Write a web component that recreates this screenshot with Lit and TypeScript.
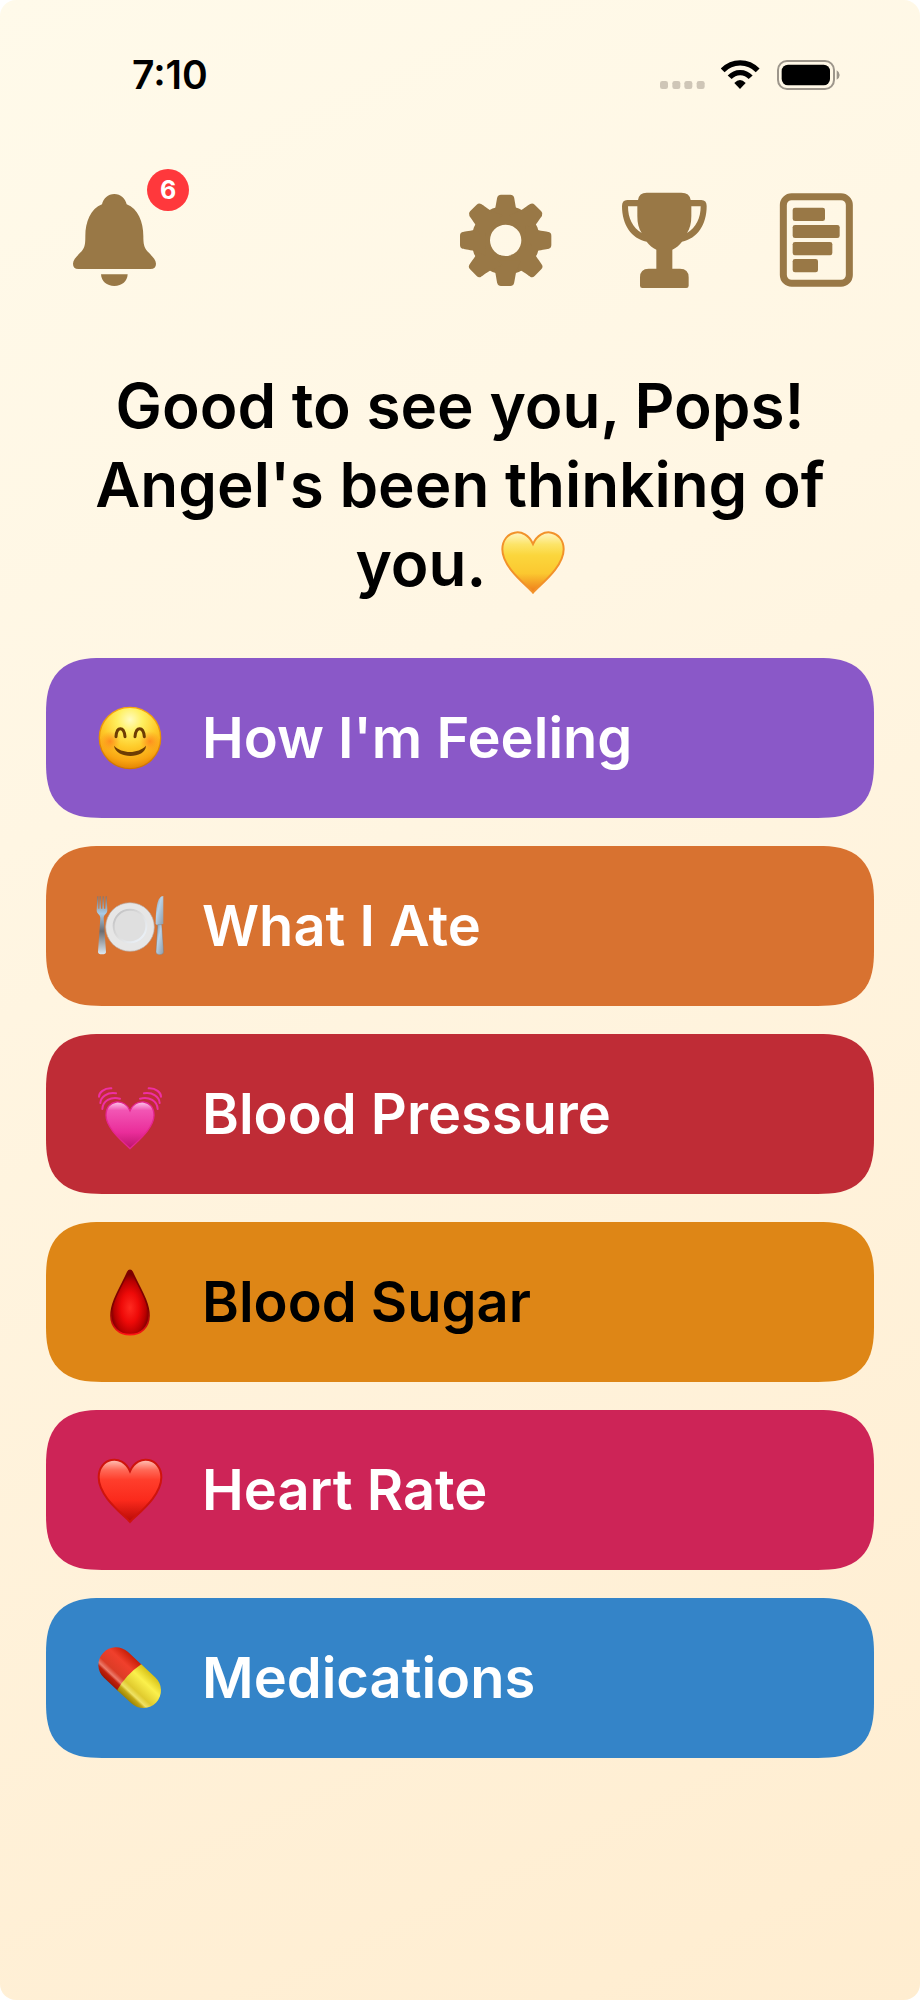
import { LitElement, html, css, svg } from "lit";
import { customElement, property } from "lit/decorators.js";

type Tone = "feeling" | "food" | "pressure" | "sugar" | "heart" | "meds";

const art: Record<Tone, unknown> = {
  feeling: svg`
    <defs>
      <radialGradient id="face" cx="50%" cy="20%" r="82%">
        <stop offset="0" stop-color="#fffbc0"/><stop offset=".25" stop-color="#fff060"/>
        <stop offset=".55" stop-color="#fecb2a"/><stop offset=".82" stop-color="#f9a512"/><stop offset="1" stop-color="#e07f00"/>
      </radialGradient>
      <radialGradient id="blush"><stop offset="0" stop-color="#ff7a1c" stop-opacity=".75"/><stop offset="1" stop-color="#ff8a1c" stop-opacity="0"/></radialGradient>
      <linearGradient id="rim" x1="0" y1="0" x2="0" y2="1"><stop offset="0" stop-color="#f9a80c"/><stop offset="1" stop-color="#d07400"/></linearGradient>
    </defs>
    <circle cx="102" cy="102" r="92" fill="url(#face)" stroke="url(#rim)" stroke-width="4"/>
    <circle cx="42" cy="112" r="31" fill="url(#blush)"/><circle cx="162" cy="112" r="31" fill="url(#blush)"/>
    <g fill="none" stroke="#6d3c04" stroke-width="9" stroke-linecap="round">
      <path d="M60 98C62 66 84 66 87 98"/><path d="M117 98C120 66 142 66 145 98"/>
    </g>
    <path d="M54 125C78 150 126 150 150 125C148 166 60 166 54 125Z" fill="#6d3c04"/>`,
  food: svg`
    <defs>
      <linearGradient id="steel" x1="0" y1="0" x2="0" y2="1"><stop offset="0" stop-color="#787476"/><stop offset=".3" stop-color="#a9cbe6"/><stop offset=".6" stop-color="#6d6c70"/><stop offset="1" stop-color="#dce8f2"/></linearGradient>
      <linearGradient id="blade" x1="0" y1="0" x2="1" y2="1"><stop offset="0" stop-color="#7b96aa"/><stop offset=".4" stop-color="#b8d2e8"/><stop offset="1" stop-color="#8f9aa4"/></linearGradient>
      <linearGradient id="well" x1="0" y1="0" x2="1" y2="1"><stop offset="0" stop-color="#bcbcbe"/><stop offset=".5" stop-color="#dedede"/><stop offset="1" stop-color="#eef6ff"/></linearGradient>
    </defs>
    <circle cx="102" cy="105" r="73" fill="#e6e6e6" stroke="#b8aaa4" stroke-width="2"/>
    <circle cx="102" cy="102" r="49" fill="#dfdfdf" stroke="url(#well)" stroke-width="6"/>
    <path d="M4 13L2 55C2 66 12 66 13 78L6 180Q6 187 18 187Q30 187 30 180L23 78C24 66 34 66 34 55L32 13L29 13L28 50L24 50L23 13L20 13L19 50L15 50L14 13L11 13L10 50L7 50L7 13Z" fill="url(#steel)"/>
    <path d="M202 12C184 12 179 48 179 96Q184 101 189 101L202 95Z" fill="url(#blade)"/>
    <path d="M185 98L180 180Q181 188 191 188Q202 188 203 180L197 98Z" fill="url(#blade)" stroke="#7c6d68" stroke-width="1"/>`,
  pressure: svg`
    <defs>
      <linearGradient id="pink" x1="0" y1="0" x2="0" y2="1"><stop offset="0" stop-color="#fbc6ea"/><stop offset=".18" stop-color="#f255b4"/><stop offset=".65" stop-color="#ea2d9a"/><stop offset="1" stop-color="#bc146c"/></linearGradient>
    </defs>
    <path d="M102 206C88 190 30 148 30 106C30 56 88 54 102 92C116 54 174 56 174 106C174 148 116 190 102 206Z" fill="url(#pink)" stroke="#e5258f" stroke-width="4"/>
    <g fill="none" stroke="#ee2fa4" stroke-width="6" stroke-linecap="round">
      <path d="M9 50C9 38 24 24 46 25"/><path d="M13 69C14 50 34 36 60 40"/><path d="M19 87C20 64 44 48 72 56"/>
      <path d="M195 50C195 38 180 24 158 25"/><path d="M191 69C190 50 170 36 144 40"/><path d="M185 87C184 64 160 48 132 56"/>
    </g>`,
  sugar: svg`
    <defs>
      <radialGradient id="drop" cx="50%" cy="58%" r="52%"><stop offset="0" stop-color="#ff2a20"/><stop offset=".45" stop-color="#ee0a08"/><stop offset=".8" stop-color="#b80000"/><stop offset="1" stop-color="#780000"/></radialGradient>
      <linearGradient id="dropRim" x1="0" y1="0" x2="0" y2="1"><stop offset=".6" stop-color="#7e0000"/><stop offset="1" stop-color="#ff1414"/></linearGradient>
    </defs>
    <path d="M102 7C104 7 107 9 109 13C126 52 159 100 159 143C159 178 135 200 102 200C69 200 45 178 45 143C45 100 78 52 95 13C97 9 100 7 102 7Z" fill="url(#drop)" stroke="url(#dropRim)" stroke-width="5"/>`,
  heart: svg`
    <defs>
      <linearGradient id="red" x1="0" y1="0" x2="0" y2="1"><stop offset="0" stop-color="#ffc4b8"/><stop offset=".16" stop-color="#ff6a58"/><stop offset=".32" stop-color="#ff3e2c"/><stop offset=".65" stop-color="#fb2a1c"/><stop offset="1" stop-color="#b80a06"/></linearGradient>
    </defs>
    <path d="M102 198C86 178 8 124 8 64C8 6 78 -10 102 46C126 -10 196 6 196 64C196 124 118 178 102 198Z" fill="url(#red)" stroke="#cf140c" stroke-width="6"/>`,
  meds: svg`
    <defs>
      <linearGradient id="capRed" x1="0" y1="0" x2="0" y2="1"><stop offset="0" stop-color="#c81e08"/><stop offset=".3" stop-color="#f0402c"/><stop offset=".65" stop-color="#dc3c26"/><stop offset=".78" stop-color="#ec7c6c"/><stop offset=".85" stop-color="#c2200c"/><stop offset="1" stop-color="#9c1604"/></linearGradient>
      <linearGradient id="capYellow" x1="0" y1="0" x2="0" y2="1"><stop offset="0" stop-color="#d8c216"/><stop offset=".3" stop-color="#fbf04c"/><stop offset=".65" stop-color="#e0ca2e"/><stop offset=".79" stop-color="#efe266"/><stop offset=".86" stop-color="#c4a814"/><stop offset="1" stop-color="#9a8208"/></linearGradient>
    </defs>
    <g transform="translate(101 101) rotate(43)">
      <path d="M2 -53H-56A53 53 0 0 0 -56 53H2Z" fill="url(#capRed)"/>
      <path d="M-2 -53H56A53 53 0 0 1 56 53H-2Q-14 0 -2 -53Z" fill="url(#capYellow)"/>
    </g>`,
};

@customElement("care-tile")
export class CareTile extends LitElement {
  @property() tone: Tone = "feeling";
  @property() label = "";

  static styles = css`
    :host { display: block; }
    .tile {
      display: flex; align-items: center; gap: 38px;
      width: 100%; min-height: 160px; padding: 0 50px; box-sizing: border-box;
      border: 0; border-radius: 46px; cursor: pointer; text-align: left;
      font-family: Inter, "Noto Sans", sans-serif; font-size: 56px; font-weight: 600; line-height: 72px;
      color: #fff;
    }
    @supports (corner-shape: superellipse(1.4)) {
      .tile { border-radius: 56px; corner-shape: superellipse(1.4); }
    }
    .emoji { width: 68px; height: 68px; flex: none; overflow: visible; }
    .feeling { background: #8a58c8; }
    .food { background: #d87230; }
    .pressure { background: #bf2c36; }
    .sugar { background: #de8616; color: #000; }
    .heart { background: #cd2457; }
    .meds { background: #3484c8; }
  `;

  render() {
    return html`<button type="button" class="tile ${this.tone}">
      <svg class="emoji" viewBox="0 0 204 204" aria-hidden="true">${art[this.tone]}</svg>
      <span>${this.label}</span>
    </button>`;
  }
}

@customElement("status-bar")
export class StatusBar extends LitElement {
  static styles = css`
    :host { display: block; }
    .bar { display: flex; justify-content: space-between; align-items: center; padding: 52px 80px 0 132px; }
    .time { font-size: 39px; font-weight: 600; line-height: 46px; }
    .signals { display: flex; align-items: center; gap: 16px; }
    .signals svg { display: block; }
  `;

  render() {
    return html`<div class="bar">
      <time class="time">7:10</time>
      <div class="signals">
        <svg width="45" height="30" viewBox="0 0 135 90" fill="#cfc6b7" aria-hidden="true">
          <rect x="0" y="63" width="24" height="24" rx="7"/><rect x="37" y="63" width="24" height="24" rx="7"/>
          <rect x="73" y="63" width="24" height="24" rx="7"/><rect x="110" y="63" width="24" height="24" rx="7"/>
        </svg>
        <svg width="40" height="30" viewBox="0 0 120 90" aria-hidden="true">
          <g fill="none" stroke="#000" stroke-width="16">
            <path d="M5 31C34 1 81 1 110 31"/><path d="M26 52C43 33 72 33 89 52"/>
          </g>
          <path d="M57 87L40 69Q57 51 74 69Z"/>
        </svg>
        <svg width="63" height="30" viewBox="0 0 189 90" aria-hidden="true">
          <rect x="3" y="3" width="168" height="84" rx="27" fill="none" stroke="#9d968b" stroke-width="6"/>
          <rect x="14" y="14" width="145" height="62" rx="19"/>
          <path d="M179 31Q188 36 188 45Q188 54 179 59Z" fill="#9d968b"/>
        </svg>
      </div>
    </div>`;
  }
}

const tooth = "M-25 -100L-32 -92C-28 -112 -26 -127 -25 -129Q-23 -137 -14 -137H14Q23 -137 25 -129C26 -127 28 -112 32 -92L46 -60H-46L-32 -92Z";

@customElement("app-root")
export class AppRoot extends LitElement {
  static styles = css`
    :host {
      display: block; min-height: 100vh; box-sizing: border-box;
      font-family: Inter, "Noto Sans", sans-serif; color: #000;
      background: linear-gradient(155deg, #fffaea 0%, #fff6e3 35%, #ffedd0 100%);
      border-radius: 16px;
    }
    .toolbar { display: flex; justify-content: space-between; padding: 94px 64px 0; }
    .actions { display: flex; gap: 70px; }
    .icon { position: relative; display: block; padding: 0; border: 0; background: none; color: #997846; cursor: pointer; }
    .icon svg { display: block; height: 96px; fill: currentColor; }
    .badge {
      position: absolute; left: 83px; top: -23px; width: 42px; height: 42px; border-radius: 50%;
      background: #ff383c; color: #fff; font: 700 25px/42px Inter, sans-serif; text-align: center;
    }
    .greeting { margin: 78px 0 55px; padding: 0 46px; font-size: 62px; font-weight: 600; line-height: 79px; text-align: center; }
    .gold { width: 64px; height: 64px; vertical-align: -8px; }
    .tiles { display: grid; gap: 28px; padding: 0 46px 46px; }
  `;

  private tiles: { tone: Tone; label: string }[] = [
    { tone: "feeling", label: "How I'm Feeling" },
    { tone: "food", label: "What I Ate" },
    { tone: "pressure", label: "Blood Pressure" },
    { tone: "sugar", label: "Blood Sugar" },
    { tone: "heart", label: "Heart Rate" },
    { tone: "meds", label: "Medications" },
  ];

  render() {
    return html`
      <status-bar></status-bar>
      <nav class="toolbar">
        <button class="icon" type="button" aria-label="Notifications, 6 new">
          <svg width="100" viewBox="0 0 300 288">
            <path d="M151 6C170 6 184 19 188 37C222 50 238 90 238 132C238 155 240 166 250 178C262 190 276 203 276 215Q276 231 259 231H43Q27 231 27 215C27 203 41 190 53 178C63 166 64 155 64 132C64 90 80 50 114 37C118 19 132 6 151 6Z"/>
            <path d="M111 247H191C190 268 174 282 151 282C128 282 112 268 111 247Z"/>
          </svg>
          <span class="badge">6</span>
        </button>
        <div class="actions">
          <button class="icon" type="button" aria-label="Settings">
            <svg width="92" viewBox="0 0 276 288">
              <g transform="translate(137 145)">
                <path fill-rule="evenodd" d="M0 -103A103 103 0 1 1 0 103A103 103 0 1 1 0 -103ZM0 -47A47 47 0 1 0 0 47A47 47 0 1 0 0 -47Z"/>
                ${[0, 45, 90, 135, 180, 225, 270, 315].map((a) => svg`<path transform="rotate(${a})" d=${tooth}/>`)}
              </g>
            </svg>
          </button>
          <button class="icon" type="button" aria-label="Achievements">
            <svg width="86" viewBox="2 0 258 288">
              <path fill-rule="evenodd" d="M76 2H180Q205 2 208 24H240Q256 24 256 42C256 98 228 140 182 149C174 160 164 167 153 173V230H176Q202 230 202 256V281Q202 288 195 288H63Q56 288 56 281V256Q56 230 82 230H105V173C94 167 84 160 76 149C30 140 2 98 2 42Q2 24 18 24H50Q53 2 76 2ZM20 43H48V72C48 94 52 110 61 123C34 108 20 78 20 43ZM238 43H210V72C210 94 206 110 197 123C224 108 238 78 238 43Z"/>
            </svg>
          </button>
          <button class="icon" type="button" aria-label="Reports">
            <svg width="78" viewBox="2 0 234 288">
              <rect x="18" y="14" width="198" height="260" rx="25" fill="none" stroke="currentColor" stroke-width="21"/>
              <rect x="46" y="47" width="97" height="40" rx="7"/><rect x="46" y="99" width="141" height="39" rx="7"/>
              <rect x="46" y="150" width="119" height="40" rx="7"/><rect x="46" y="201" width="76" height="40" rx="7"/>
            </svg>
          </button>
        </div>
      </nav>
      <h1 class="greeting">Good to see you, Pops! Angel's been thinking of you. <svg class="gold" viewBox="0 0 192 192" role="img" aria-label="yellow heart">
          <defs>
            <linearGradient id="gold" x1="0" y1="0" x2="0" y2="1"><stop offset="0" stop-color="#fff6c4"/><stop offset=".2" stop-color="#fce468"/><stop offset=".38" stop-color="#fbd63c"/><stop offset=".68" stop-color="#fbc830"/><stop offset="1" stop-color="#ee7a1a"/></linearGradient>
          </defs>
          <path d="M96 188C80 168 4 114 4 58C4 2 72 -14 96 42C120 -14 188 2 188 58C188 114 112 168 96 188Z" fill="url(#gold)" stroke="#f2922a" stroke-width="6"/>
        </svg></h1>
      <main class="tiles">
        ${this.tiles.map((t) => html`<care-tile .tone=${t.tone} .label=${t.label}></care-tile>`)}
      </main>`;
  }
}
